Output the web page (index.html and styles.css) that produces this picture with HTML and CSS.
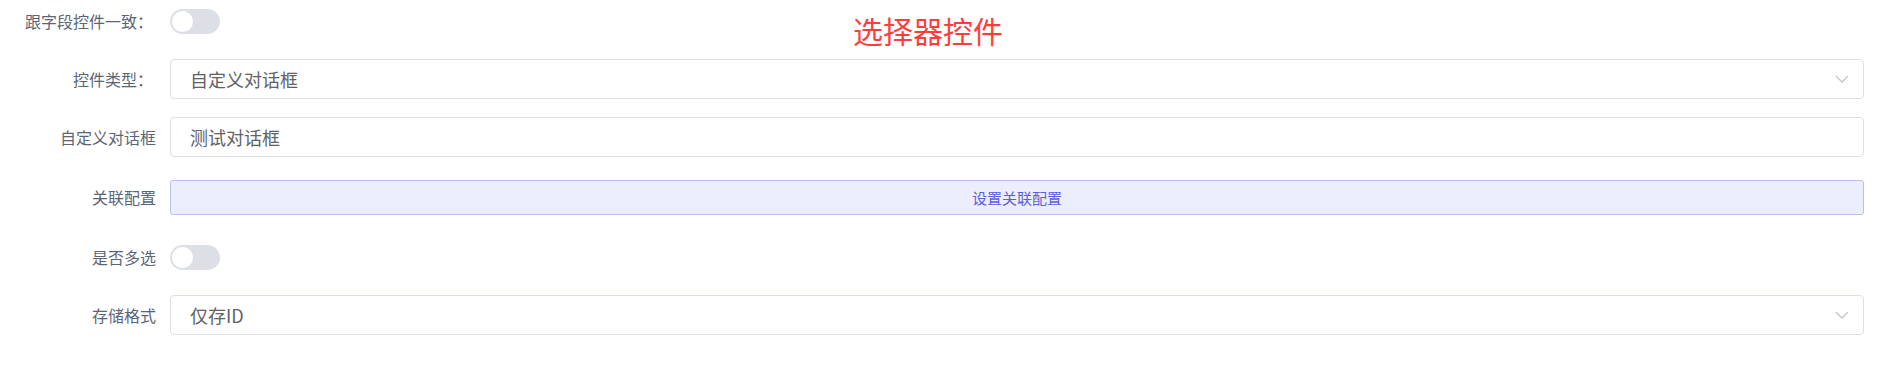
FILE: index.html
```html
<!DOCTYPE html>
<html lang="zh-CN">
<head>
  <meta charset="UTF-8">
  <meta name="viewport" content="width=device-width, initial-scale=1.0">
  <title>选择器控件</title>
  <link rel="stylesheet" href="styles.css">
</head>
<body>
  <form class="form">
    <h2 class="form-title">选择器控件</h2>

    <div class="form-item">
      <label class="form-label form-label-colon">跟字段控件一致：</label>
      <span class="switch"><span class="switch-knob"></span></span>
    </div>

    <div class="form-item">
      <label class="form-label form-label-colon">控件类型：</label>
      <div class="select">
        <span class="select-value">自定义对话框</span>
        <svg class="select-arrow" width="14" height="8" viewBox="0 0 14 8">
          <path d="M1 1l6 6 6-6" fill="none" stroke="#c0c4cc" stroke-width="1.3"/>
        </svg>
      </div>
    </div>

    <div class="form-item">
      <label class="form-label">自定义对话框</label>
      <div class="input">测试对话框</div>
    </div>

    <div class="form-item form-item-button">
      <label class="form-label">关联配置</label>
      <button type="button" class="btn-config">设置关联配置</button>
    </div>

    <div class="form-item">
      <label class="form-label">是否多选</label>
      <span class="switch"><span class="switch-knob"></span></span>
    </div>

    <div class="form-item">
      <label class="form-label">存储格式</label>
      <div class="select">
        <span class="select-value">仅存ID</span>
        <svg class="select-arrow" width="14" height="8" viewBox="0 0 14 8">
          <path d="M1 1l6 6 6-6" fill="none" stroke="#c0c4cc" stroke-width="1.3"/>
        </svg>
      </div>
    </div>
  </form>
</body>
</html>
```

FILE: styles.css
```css
:root {
  --label: #5b6579;
  --text: #606266;
  --border: #dcdfe6;
  --switch-off: #dcdfe6;
  --primary: #5b5fe0;
  --radius: 4px;
}

* {
  box-sizing: border-box;
  margin: 0;
  padding: 0;
}

body {
  font-family: "Noto Sans CJK SC", "Noto Sans", sans-serif;
  background: #fff;
  color: var(--text);
}

.form {
  position: relative;
  padding: 1px 28px 0 0;
}

.form-title {
  position: absolute;
  left: 853px;
  top: 10px;
  font-size: 30px;
  font-weight: 400;
  line-height: 40px;
  color: #ff3d3d;
}

.form-item {
  display: flex;
  align-items: center;
  min-height: 40px;
  margin-bottom: 18px;
}

.form-item-button {
  min-height: 44px;
}

.form-label {
  flex: 0 0 170px;
  padding-right: 14px;
  text-align: right;
  font-size: 16px;
  color: var(--label);
}

.form-label-colon {
  padding-right: 17px;
}

.switch {
  position: relative;
  display: inline-block;
  width: 50px;
  height: 25px;
  border-radius: 13px;
  background: var(--switch-off);
}

.switch-knob {
  position: absolute;
  top: 2px;
  left: 2px;
  width: 21px;
  height: 21px;
  border-radius: 50%;
  background: #fff;
}

.select,
.input {
  flex: 1;
  display: flex;
  align-items: center;
  height: 40px;
  padding: 0 14px 0 19px;
  border: 1px solid var(--border);
  border-radius: var(--radius);
  font-size: 18px;
  color: var(--text);
}

.select-value {
  flex: 1;
}

.btn-config {
  flex: 1;
  height: 35px;
  border: 1px solid #babcf2;
  border-radius: 3px;
  background: #ecedfd;
  color: var(--primary);
  font-family: inherit;
  font-size: 15px;
  cursor: pointer;
}
```
